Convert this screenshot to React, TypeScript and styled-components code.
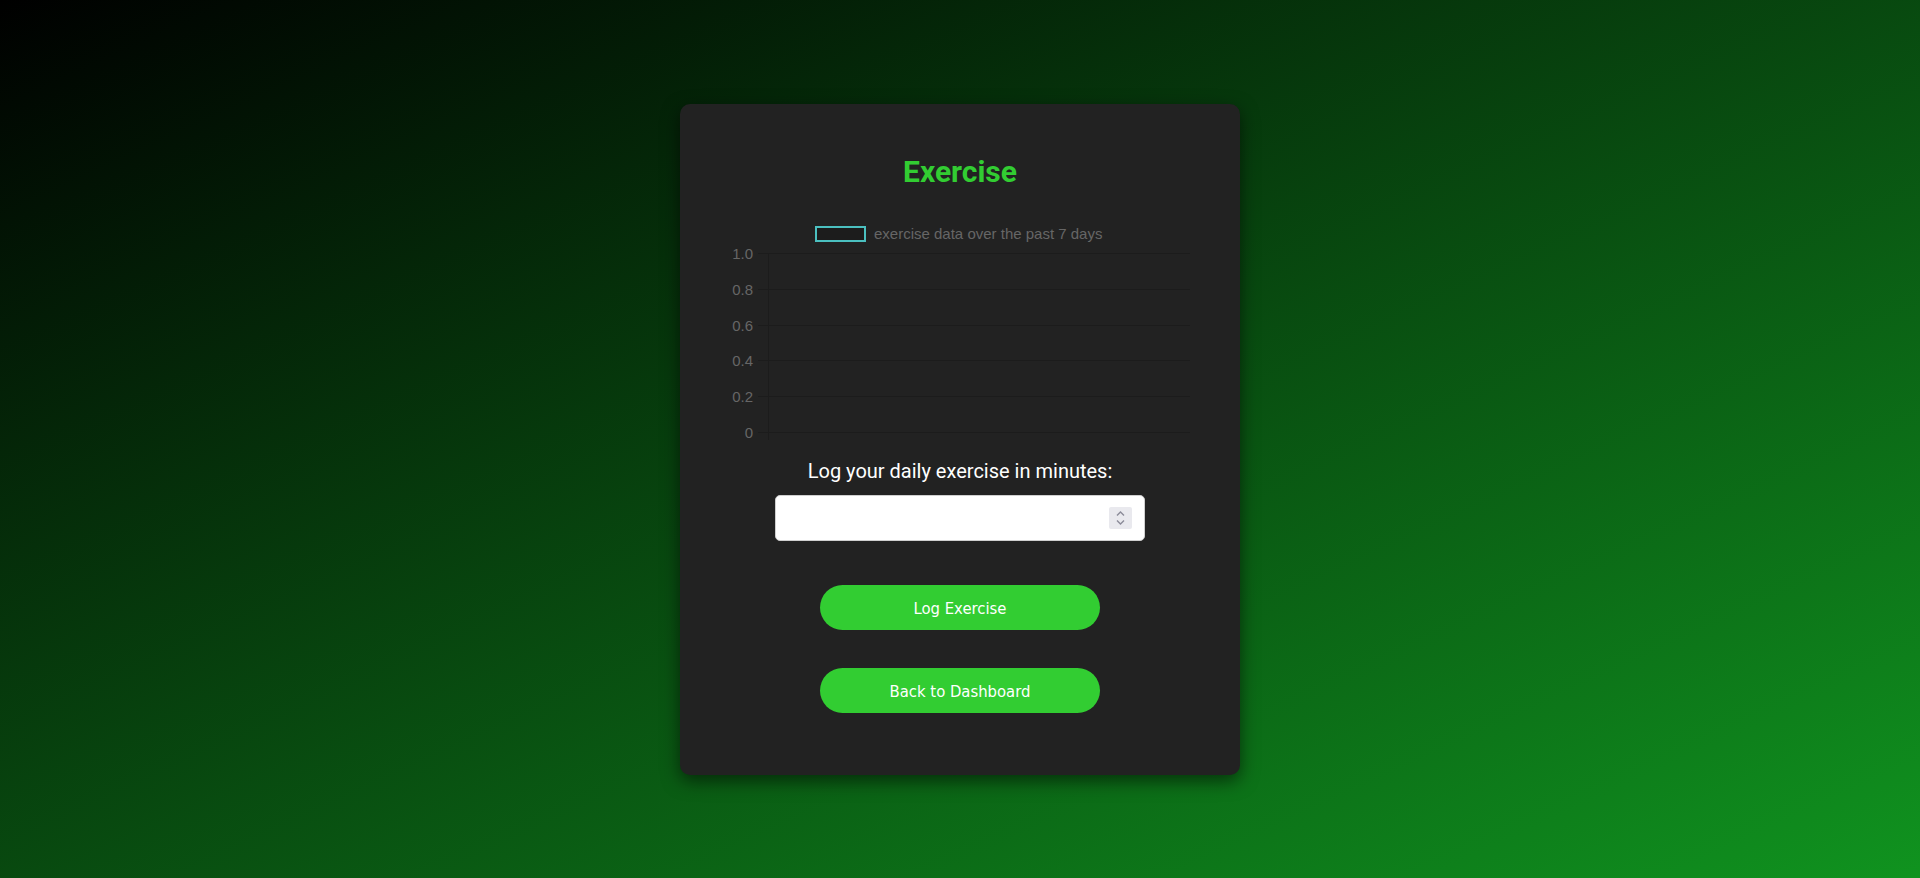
import styled, { createGlobalStyle } from "styled-components";

const GlobalStyle = createGlobalStyle`
  html, body {
    margin: 0;
    padding: 0;
  }
  body {
    font-family: Roboto, "Liberation Sans", sans-serif;
  }
  * {
    box-sizing: border-box;
  }
`;

const Page = styled.div`
  min-height: 100vh;
  display: flex;
  align-items: center;
  justify-content: center;
  background: linear-gradient(to bottom right, #000000, #10931f);
`;

const Card = styled.div`
  width: 560px;
  padding: 50px 50px 62px;
  background-color: #222222;
  border-radius: 10px;
  box-shadow: 0 6px 18px rgba(0, 0, 0, 0.55);
  display: flex;
  flex-direction: column;
  align-items: center;
`;

const Title = styled.h2`
  margin: 0;
  font-family: Roboto, sans-serif;
  font-size: 30px;
  font-weight: 700;
  line-height: 35px;
  color: #32cd32;
`;

const ChartBox = styled.div`
  width: 460px;
  height: 230px;
  margin-top: 27px;
  svg {
    display: block;
  }
`;

const Label = styled.label`
  margin-top: 14px;
  font-family: Roboto, sans-serif;
  font-size: 20px;
  line-height: 23px;
  color: #ffffff;
`;

const InputBox = styled.div`
  width: 370px;
  height: 46px;
  margin-top: 12px;
  display: flex;
  align-items: center;
  background: #ffffff;
  border: 1px solid #cfcfcf;
  border-radius: 5px;
  padding: 0 12px 0 10px;
`;

const NumberInput = styled.input`
  flex: 1;
  min-width: 0;
  height: 100%;
  border: none;
  outline: none;
  background: transparent;
  font-family: Roboto, sans-serif;
  font-size: 16px;
  -moz-appearance: textfield;
  &::-webkit-inner-spin-button,
  &::-webkit-outer-spin-button {
    -webkit-appearance: none;
    margin: 0;
  }
`;

const Spinner = styled.span`
  width: 23px;
  height: 22px;
  display: flex;
  align-items: center;
  justify-content: center;
  background: #e9e9ee;
  border-radius: 2px;
`;

const Button = styled.button<{ $gap: number }>`
  width: 280px;
  height: 45px;
  margin-top: ${(p) => p.$gap}px;
  padding: 3px 0 0;
  border: none;
  border-radius: 23px;
  background-color: #32cd32;
  color: #ffffff;
  font-family: "DejaVu Sans Condensed", "DejaVu Sans", sans-serif;
  font-size: 16.5px;
  cursor: pointer;
`;

const ticks = ["1.0", "0.8", "0.6", "0.4", "0.2", "0"];

function Chart() {
  const top = 37;
  const step = 35.8;
  return (
    <svg width="460" height="230" viewBox="0 0 460 230">
      <rect x="86" y="11" width="49" height="14" fill="#1c1c1c" stroke="#4bc0c0" strokeWidth="2" />
      <text x="144" y="23" fontFamily="'Liberation Sans', Arial, sans-serif" fontSize="15" fill="#666666">
        exercise data over the past 7 days
      </text>
      {ticks.map((t, i) => {
        const y = Math.round(top + i * step) + 0.5;
        return (
          <g key={t}>
            <line x1="28" x2="460" y1={y} y2={y} stroke="#1c1c1c" strokeWidth="1" />
            <text
              x="23"
              y={y + 5}
              textAnchor="end"
              fontFamily="'Liberation Sans', Arial, sans-serif"
              fontSize="15"
              fill="#666666"
            >
              {t}
            </text>
          </g>
        );
      })}
      <line x1="38.5" x2="38.5" y1={top} y2={top + 5 * step + 8} stroke="#1c1c1c" strokeWidth="1" />
    </svg>
  );
}

export default function App() {
  return (
    <>
      <GlobalStyle />
      <Page>
        <Card>
          <Title>Exercise</Title>
          <ChartBox>
            <Chart />
          </ChartBox>
          <Label htmlFor="minutes">Log your daily exercise in minutes:</Label>
          <InputBox>
            <NumberInput id="minutes" type="number" />
            <Spinner>
              <svg width="11" height="16" viewBox="0 0 11 16" fill="none" stroke="#8b8b99" strokeWidth="1.4">
                <polyline points="2,5.5 5.5,2 9,5.5" />
                <polyline points="2,10.5 5.5,14 9,10.5" />
              </svg>
            </Spinner>
          </InputBox>
          <Button $gap={44}>Log Exercise</Button>
          <Button $gap={38}>Back to Dashboard</Button>
        </Card>
      </Page>
    </>
  );
}
